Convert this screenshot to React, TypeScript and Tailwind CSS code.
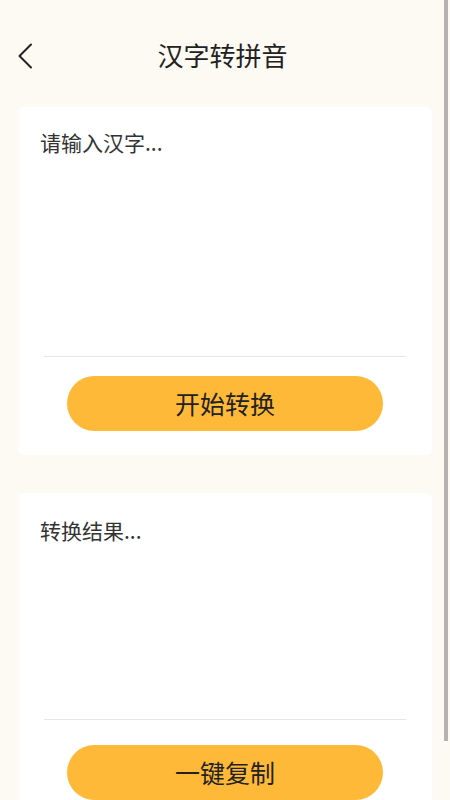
import React from "react";

export default function App() {
  return (
    <div
      className="relative w-full h-[800px] overflow-hidden bg-[#fdf9f3]"
      style={{ fontFamily: '"Noto Sans CJK SC", "Noto Sans", sans-serif' }}
    >
      <div className="relative h-[107px] pt-[3px] flex items-center justify-center">
        <svg
          className="absolute left-[17px] top-[43px]"
          width="16"
          height="26"
          viewBox="0 0 16 26"
          fill="none"
        >
          <path d="M14 1.5 L2.5 13 L14 24.5" stroke="#222" strokeWidth="2" strokeLinecap="round" strokeLinejoin="round" />
        </svg>
        <div className="mr-[5px] text-[26px] leading-[36px] text-[#222]">汉字转拼音</div>
      </div>

      <div className="mx-[18px] bg-white rounded-[6px] px-[22px] pt-[21px] pb-[24px]">
        <div className="h-[228px] text-[21px] leading-[28px] text-[#333]">请输入汉字...</div>
        <div className="h-px mx-[4px] bg-[#e6e6e6]" />
        <div className="mt-[19px] mx-auto w-[316px] h-[55px] rounded-full bg-[#ffb938] flex items-center justify-center text-[25px] text-[#222]">
          开始转换
        </div>
      </div>

      <div className="mt-[38px] mx-[18px] bg-white rounded-[6px] px-[22px] pt-[23px] pb-[24px]">
        <div className="h-[203px] text-[21px] leading-[28px] text-[#333]">转换结果...</div>
        <div className="h-px mx-[4px] bg-[#e6e6e6]" />
        <div className="mt-[25px] mx-auto w-[316px] h-[55px] rounded-full bg-[#ffb938] flex items-center justify-center text-[25px] text-[#222]">
          一键复制
        </div>
      </div>

      <div className="absolute right-[2px] top-0 w-[4px] h-[741px] bg-[#b6b2ae]" />
    </div>
  );
}
